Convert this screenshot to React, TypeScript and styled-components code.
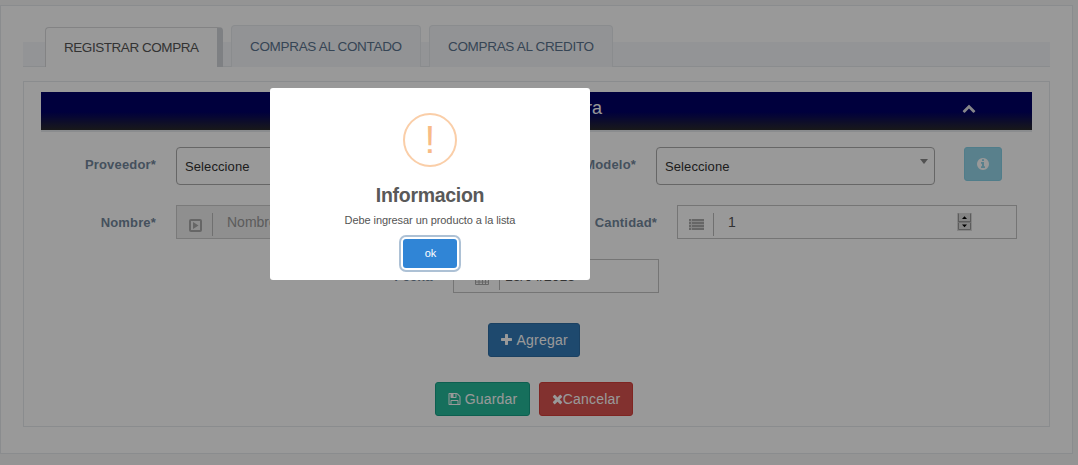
import React from "react";
import styled, { createGlobalStyle } from "styled-components";

const GlobalStyle = createGlobalStyle`
  * { box-sizing: border-box; }
  body {
    margin: 0;
    background: #f7f7f7;
    font-family: "Liberation Sans", Arial, sans-serif;
    font-size: 14px;
    color: #333;
    overflow: hidden;
  }
`;

const Page = styled.div`
  height: 465px;
  padding-top: 5px;
`;

const Panel = styled.main`
  width: 1073px;
  height: 449px;
  padding: 19px 22px 0;
  background: #fff;
  border: 1px solid #e6e9ed;
`;

const TabBar = styled.nav`
  display: flex;
  align-items: flex-end;
  gap: 8px;
  height: 42px;
  padding-left: 22px;
  background: linear-gradient(#e6e9ed, #e6e9ed) 0 100% / 100% 1px no-repeat,
    linear-gradient(#f5f7fa, #f5f7fa) 0 100% / 100% 25px no-repeat;
`;

const Tab = styled.button<{ $active?: boolean; $width: number }>`
  width: ${(p) => p.$width}px;
  height: ${(p) => (p.$active ? 40 : 42)}px;
  padding: 0 0 ${(p) => (p.$active ? 0 : 1)}px 18px;
  font: 13.5px/17px "Liberation Sans", Arial, sans-serif;
  letter-spacing: ${(p) => (p.$active ? -0.45 : -0.32)}px;
  text-align: left;
  white-space: nowrap;
  color: ${(p) => (p.$active ? "#555" : "#5a738e")};
  background: ${(p) => (p.$active ? "#fff" : "#f3f5f8")};
  border: 1px solid ${(p) => (p.$active ? "#dadbdd" : "#e6e9ed")};
  border-right: ${(p) => (p.$active ? "6px solid #d3d6da" : "1px solid #e6e9ed")};
  border-bottom: 0;
  border-radius: 4px 4px 0 0;
`;

const FormPanel = styled.section`
  width: 1027px;
  height: 346px;
  margin-top: 14px;
  padding: 10px 17px;
  border: 1px solid #e6e9ed;
`;

const Header = styled.header`
  display: flex;
  align-items: flex-start;
  justify-content: space-between;
  height: 40px;
  padding: 5px 56px 0 0;
  color: #fff;
  background: linear-gradient(#006 0, #006 52%, #2a2a2c 100%) padding-box;
  border-bottom: 2px solid #e6e9ed;
  svg { margin-top: 4px; color: #e0e0e4; }
`;

const Title = styled.h2`
  width: 561px;
  margin: 0;
  font-size: 18px;
  font-weight: 400;
  line-height: 22px;
  text-align: right;
`;

const Row = styled.div<{ $top: number; $center?: boolean }>`
  display: flex;
  align-items: flex-start;
  justify-content: ${(p) => (p.$center ? "center" : "flex-start")};
  margin-top: ${(p) => p.$top}px;
  height: 34px;
`;

const Label = styled.label<{ $width: number; $gap?: number }>`
  width: ${(p) => p.$width}px;
  margin-right: ${(p) => p.$gap ?? 20}px;
  padding-top: 9px;
  font-size: 13px;
  line-height: 17px;
  font-weight: 700;
  letter-spacing: 0.17px;
  text-align: right;
  color: #73879c;
`;

const Select = styled.div`
  display: flex;
  justify-content: space-between;
  width: 279px;
  height: 38px;
  padding: 10px 6px 0 8px;
  font-size: 13px;
  line-height: 17px;
  letter-spacing: 0.1px;
  border: 1px solid #aaa;
  border-radius: 4px;
`;

const Caret = styled.i`
  width: 0;
  height: 0;
  margin-top: 1px;
  border: 4px solid transparent;
  border-top: 5px solid #888;
  border-bottom: 0;
`;

const Field = styled.div<{ $width: number; $disabled?: boolean; $pad?: number }>`
  display: flex;
  align-items: flex-start;
  width: ${(p) => p.$width}px;
  height: 34px;
  padding-left: ${(p) => p.$pad ?? 10}px;
  line-height: 17px;
  color: ${(p) => (p.$disabled ? "#999" : "#555")};
  background: ${(p) => (p.$disabled ? "#eee" : "#fff")};
  border: 1px solid ${(p) => (p.$disabled ? "#ccc" : "#c4c4c4")};
`;

const FieldIcon = styled.span<{ $gap: number }>`
  display: flex;
  width: 26px;
  height: 23px;
  margin: 7px ${(p) => p.$gap}px 0 0;
  padding-top: 4px;
  color: #aaa;
  border-right: 1px solid #bbb;
`;

const Value = styled.span`
  flex: 1;
  padding-top: 8px;
`;

const Spinner = styled.span`
  display: flex;
  margin: 7px 44px 0 0;
`;

const Button = styled.button<{ $bg: string; $border: string; $width: number; $faded?: boolean }>`
  display: flex;
  align-items: center;
  justify-content: center;
  width: ${(p) => p.$width}px;
  height: 34px;
  padding: 0;
  font: 14px/20px "Liberation Sans", Arial, sans-serif;
  letter-spacing: 0.2px;
  white-space: pre;
  color: #fff;
  background: ${(p) => p.$bg};
  border: 1px solid ${(p) => p.$border};
  border-radius: 3px;
  opacity: ${(p) => (p.$faded ? 0.65 : 1)};
`;

const InfoSlot = styled.div`
  margin-left: 29px;
`;

const Actions = styled(Row)`
  gap: 9px;
  padding-right: 5px;
`;

const Backdrop = styled.div`
  position: fixed;
  inset: 0;
  padding: 88px 0 0 270px;
  background: rgba(0, 0, 0, 0.4);
`;

const Dialog = styled.div`
  display: flex;
  flex-direction: column;
  align-items: center;
  width: 320px;
  height: 192px;
  padding-top: 25px;
  background: #fff;
  border-radius: 3px;
  color: #545454;
`;

const WarningMark = styled.div`
  width: 54px;
  height: 54px;
  border: 2px solid #facea8;
  border-radius: 50%;
  color: #f8bb86;
  font-size: 39px;
  line-height: 49px;
  text-align: center;
`;

const DialogTitle = styled.h3`
  margin: 16px 0 0;
  font-size: 19.5px;
  line-height: 24px;
  letter-spacing: -0.3px;
  color: #595959;
`;

const DialogText = styled.p`
  margin: 6px 0 0;
  font-size: 11px;
  line-height: 14px;
  letter-spacing: -0.08px;
`;

const Confirm = styled.button`
  width: 54px;
  height: 29px;
  margin-top: 12px;
  padding: 0 0 1px 1px;
  font: 11px "Liberation Sans", Arial, sans-serif;
  color: #fff;
  background: #3085d6;
  border: 0;
  border-radius: 3px;
  box-shadow: 0 0 0 2px #fff, 0 0 0 4px rgba(50, 100, 150, 0.4);
`;

const paths = {
  plus: "M1600 736v192q0 40-28 68t-68 28h-416v416q0 40-28 68t-68 28h-192q-40 0-68-28t-28-68v-416h-416q-40 0-68-28t-28-68v-192q0-40 28-68t68-28h416v-416q0-40 28-68t68-28h192q40 0 68 28t28 68v416h416q40 0 68 28t28 68z",
  close: "M1490 1322q0 40-28 68l-136 136q-28 28-68 28t-68-28l-294-294-294 294q-28 28-68 28t-68-28l-136-136q-28-28-28-68t28-68l294-294-294-294q-28-28-28-68t28-68l136-136q28-28 68-28t68 28l294 294 294-294q28-28 68-28t68 28l136 136q28 28 28 68t-28 68l-294 294 294 294q28 28 28 68z",
  save: "M512 1536h768v-384h-768v384zm896 0h128v-896q0-14-10-38.5t-20-34.5l-281-281q-10-10-34-20t-39-10v416q0 40-28 68t-68 28h-576q-40 0-68-28t-28-68v-416h-128v1280h128v-416q0-40 28-68t68-28h832q40 0 68 28t28 68v416zm-384-928v-320q0-13-9.5-22.5t-22.5-9.5h-192q-13 0-22.5 9.5t-9.5 22.5v320q0 13 9.5 22.5t22.5 9.5h192q13 0 22.5-9.5t9.5-22.5zm640 32v928q0 40-28 68t-68 28h-1344q-40 0-68-28t-28-68v-1344q0-40 28-68t68-28h928q40 0 88 20t76 48l280 280q28 28 48 76t20 88z",
  info: "M1152 1376v-160q0-14-9-23t-23-9h-96v-512q0-14-9-23t-23-9h-320q-14 0-23 9t-9 23v160q0 14 9 23t23 9h96v320h-96q-14 0-23 9t-9 23v160q0 14 9 23t23 9h448q14 0 23-9t9-23zm-128-896v-160q0-14-9-23t-23-9h-192q-14 0-23 9t-9 23v160q0 14 9 23t23 9h192q14 0 23-9t9-23zm640 416q0 209-103 385.5t-279.5 279.5-385.5 103-385.5-103-279.5-279.5-103-385.5 103-385.5 279.5-279.5 385.5-103 385.5 103 279.5 279.5 103 385.5z",
  up: "M1683 1331l-166 165q-19 19-45 19t-45-19l-531-531-531 531q-19 19-45 19t-45-19l-166-165q-19-19-19-45.5t19-45.5l742-741q19-19 45-19t45 19l742 741q19 19 19 45.5t-19 45.5z",
};

const Icon = ({ name, size = 14, crop = 0 }: { name: keyof typeof paths; size?: number; crop?: number }) => (
  <svg width={size - crop * 2} height={size} viewBox={`${crop * 128} 0 ${1792 - crop * 256} 1792`} fill="currentColor">
    <path d={paths[name]} />
  </svg>
);

const PlayIcon = () => (
  <svg width="15" height="15" viewBox="0 0 15 15">
    <rect x="3" y="3" width="11" height="11" rx="1" fill="none" stroke="currentColor" strokeWidth="2" />
    <path d="M6 5v7l5.5-3.5z" fill="currentColor" />
  </svg>
);

const ListIcon = () => (
  <svg width="17" height="15" viewBox="0 0 17 15" fill="currentColor">
    {[2, 5, 8, 11].map((y) => (
      <g key={y}>
        <rect x="1" y={y} width="2" height="2" />
        <rect x="4" y={y} width="12" height="2" />
      </g>
    ))}
    <path d="M1 2h15v11H1z" opacity=".4" />
  </svg>
);

const CalendarIcon = () => (
  <svg width="16" height="15" viewBox="0 0 16 15" fill="none" stroke="currentColor">
    <path d="M1.5 2.5h13v11h-13zM1.5 5.5h13M1.5 8.5h13M1.5 11h13M5 5.5v8M8.5 5.5v8M11.5 5.5v8" />
    <path d="M5 .5v3M11.5 .5v3" strokeWidth="2" />
  </svg>
);

const Stepper = () => (
  <svg width="15" height="18" viewBox="0 0 15 18">
    <path d="M0 0h15v18H0z" fill="#dcdcdc" />
    <path d="M1.5 .5v16h12V.5M1 8.5h13" fill="none" stroke="#999" />
    <path d="M1 9.5h13" stroke="#bbb" />
    <path d="M5 6L7.5 3.2 10 6zM5 11.5l2.5 2.8 2.5-2.8z" fill="#000" />
  </svg>
);

export default function App() {
  return (
    <>
      <GlobalStyle />
      <Page>
        <Panel>
          <TabBar>
            <Tab $active $width={178}>REGISTRAR COMPRA</Tab>
            <Tab $width={190}>COMPRAS AL CONTADO</Tab>
            <Tab $width={184}>COMPRAS AL CREDITO</Tab>
          </TabBar>
          <FormPanel>
            <Header>
              <Title>Registrar Compra</Title>
              <Icon name="up" />
            </Header>
            <Row $top={15}>
              <Label $width={115}>Proveedor*</Label>
              <Select>Seleccione<Caret /></Select>
              <Label $width={181}>Modelo*</Label>
              <Select>Seleccione<Caret /></Select>
              <InfoSlot>
                <Button $bg="#5bc0de" $border="#46b8da" $width={38} $faded aria-label="Info">
                  <Icon name="info" />
                </Button>
              </InfoSlot>
            </Row>
            <Row $top={24}>
              <Label $width={115}>Nombre*</Label>
              <Field $width={340} $disabled>
                <FieldIcon $gap={14}><PlayIcon /></FieldIcon>
                <Value>Nombre</Value>
              </Field>
              <Label $width={141}>Cantidad*</Label>
              <Field $width={340}>
                <FieldIcon $gap={14}><ListIcon /></FieldIcon>
                <Value>1</Value>
                <Spinner><Stepper /></Spinner>
              </Field>
            </Row>
            <Row $top={20}>
              <Label $width={397} $gap={15}>Fecha*</Label>
              <Field $width={206} $pad={20}>
                <FieldIcon $gap={5}><CalendarIcon /></FieldIcon>
                <Value>13/04/2018</Value>
              </Field>
            </Row>
            <Actions $top={30} $center>
              <Button $bg="#337ab7" $border="#2e6da4" $width={92}><Icon name="plus" crop={0.5} /> Agregar</Button>
            </Actions>
            <Actions $top={25} $center>
              <Button $bg="#26b99a" $border="#169f85" $width={95}><Icon name="save" crop={0.5} /> Guardar</Button>
              <Button $bg="#d9534f" $border="#d43f3a" $width={94}><Icon name="close" crop={1.5} />Cancelar</Button>
            </Actions>
          </FormPanel>
        </Panel>
      </Page>
      <Backdrop>
        <Dialog role="dialog">
          <WarningMark>!</WarningMark>
          <DialogTitle>Informacion</DialogTitle>
          <DialogText>Debe ingresar un producto a la lista</DialogText>
          <Confirm>ok</Confirm>
        </Dialog>
      </Backdrop>
    </>
  );
}
